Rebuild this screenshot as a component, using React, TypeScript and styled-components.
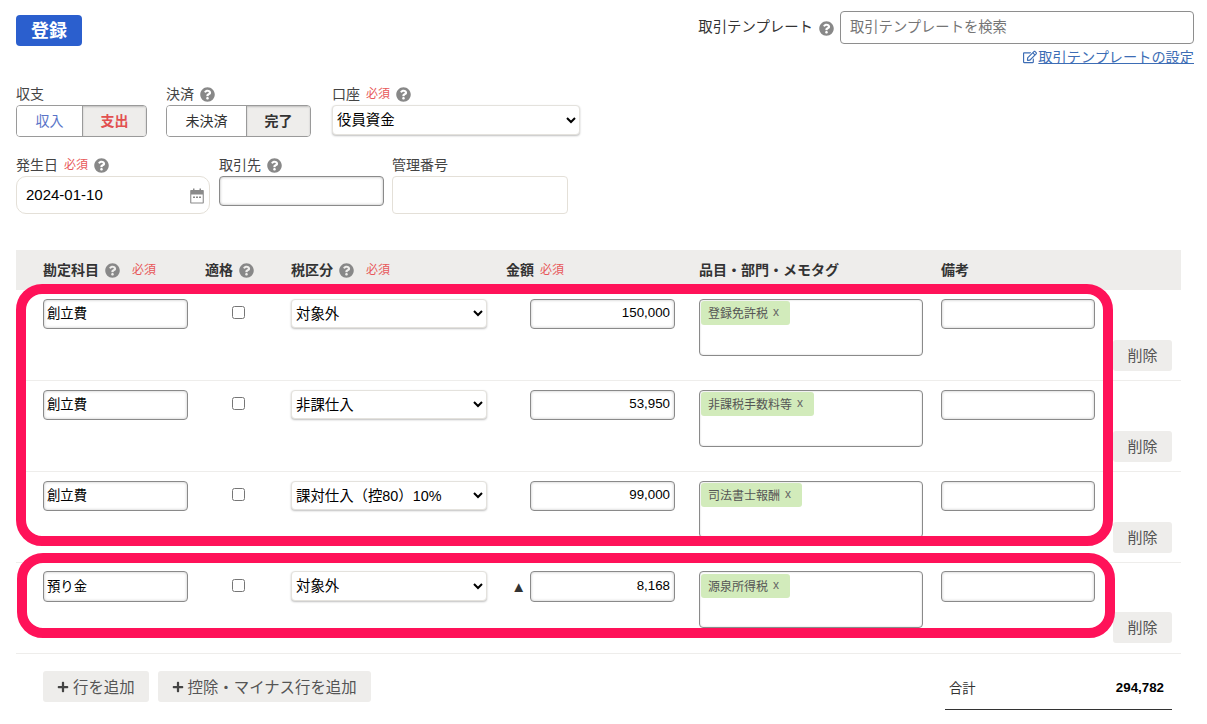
import React from "react";
import styled, { createGlobalStyle } from "styled-components";
import { FaQuestionCircle, FaPlus, FaRegEdit } from "react-icons/fa";

const FONT = `"Liberation Sans", "Noto Sans CJK JP", sans-serif`;

const GlobalStyle = createGlobalStyle`
  html, body {
    margin: 0;
    padding: 0;
    background: #fff;
    color: #333;
    font-family: ${FONT};
    font-size: 14px;
  }
  * { box-sizing: border-box; }
  input, select, button { font-family: ${FONT}; }
`;

const COLUMNS = "145px 103px 196px 188px 248px 172px 77px";

interface LineData {
  account: string;
  tax: string;
  amount: string;
  tag: string;
  minus?: boolean;
}

const LINES: LineData[] = [
  { account: "創立費", tax: "対象外", amount: "150,000", tag: "登録免許税" },
  { account: "創立費", tax: "非課仕入", amount: "53,950", tag: "非課税手数料等" },
  { account: "創立費", tax: "課対仕入（控80）10%", amount: "99,000", tag: "司法書士報酬" },
  { account: "預り金", tax: "対象外", amount: "8,168", tag: "源泉所得税", minus: true },
];

const HelpMark = styled.span`
  display: inline-flex;
  margin: 3px 0 0 6px;
  color: #888;
`;

const Help = () => (
  <HelpMark>
    <FaQuestionCircle size={15} />
  </HelpMark>
);

const Calendar = () => (
  <svg width="14" height="16" viewBox="0 0 14 16">
    <path d="M3 0.5h1.5v2H3zM9.5 0.5H11v2H9.5z" fill="#8a8a8a" />
    <path d="M1 2h12a.8.8 0 0 1 .8.8v12a.8.8 0 0 1-.8.8H1a.8.8 0 0 1-.8-.8v-12A.8.8 0 0 1 1 2zm.3 4.5V14.5h11.4V6.500z" fill="#8a8a8a" fillRule="evenodd" />
    <path d="M3 8.500h2v1.500H3zM6 8.500h2v1.500H6zM9 8.500h2v1.500H9z" fill="#8a8a8a" />
  </svg>
);

const Line = ({ line }: { line: LineData }) => (
  <Row $minus={line.minus}>
    <div>
      <AccountInput defaultValue={line.account} />
    </div>
    <CheckCell $minus={line.minus}>
      <input type="checkbox" />
    </CheckCell>
    <div>
      <TaxSelect defaultValue={line.tax}>
        <option>{line.tax}</option>
      </TaxSelect>
    </div>
    <AmountCell>
      {line.minus && <Triangle>▲</Triangle>}
      <AmountInput defaultValue={line.amount} />
    </AmountCell>
    <TagCell>
      <TagBox $minus={line.minus}>
        <Tag>
          {line.tag}
          <TagClose>x</TagClose>
        </Tag>
      </TagBox>
    </TagCell>
    <MemoCell>
      <MemoInput />
    </MemoCell>
    <DeleteCell>
      <GrayButton>削除</GrayButton>
    </DeleteCell>
  </Row>
);

export default function App() {
  return (
    <Page>
      <GlobalStyle />
      <TopBar>
        <SubmitButton>登録</SubmitButton>
        <TemplateArea>
          <TemplateRow>
            <TemplateLabel>取引テンプレート</TemplateLabel>
            <Help />
            <TemplateSearch placeholder="取引テンプレートを検索" />
          </TemplateRow>
          <SettingLink href="#">
            <FaRegEdit size={14} />
            取引テンプレートの設定
          </SettingLink>
        </TemplateArea>
      </TopBar>

      <FormRow $height={71}>
        <Field $width={150}>
          <FieldLabel>収支</FieldLabel>
          <Toggle $width={131}>
            <ToggleItem $width={65} $color="#5a74c8">収入</ToggleItem>
            <ToggleItem $active $color="#e25050">支出</ToggleItem>
          </Toggle>
        </Field>
        <Field $width={166}>
          <FieldLabel>決済<Help /></FieldLabel>
          <Toggle $width={145}>
            <ToggleItem $width={79}>未決済</ToggleItem>
            <ToggleItem $active>完了</ToggleItem>
          </Toggle>
        </Field>
        <Field $width={248}>
          <FieldLabel>口座<Required>必須</Required><Help /></FieldLabel>
          <AccountSelect defaultValue="役員資金">
            <option>役員資金</option>
          </AccountSelect>
        </Field>
      </FormRow>

      <FormRow $height={95}>
        <Field $width={203}>
          <FieldLabel>発生日<Required>必須</Required><Help /></FieldLabel>
          <DateWrap>
            <DateInput defaultValue="2024-01-10" />
            <CalendarIcon><Calendar /></CalendarIcon>
          </DateWrap>
        </Field>
        <Field $width={173}>
          <FieldLabel>取引先<Help /></FieldLabel>
          <PartnerInput />
        </Field>
        <Field $width={176}>
          <FieldLabel>管理番号</FieldLabel>
          <NumberInput />
        </Field>
      </FormRow>

      <Table>
        <HeaderRow>
          <HeadCell>勘定科目<Help /><Required $wide>必須</Required></HeadCell>
          <HeadCell $pad={17}>適格<Help /></HeadCell>
          <HeadCell>税区分<Help /><Required $wide>必須</Required></HeadCell>
          <HeadCell $pad={19}>金額<Required>必須</Required></HeadCell>
          <HeadCell $pad={24}>品目・部門・メモタグ</HeadCell>
          <HeadCell $pad={18}>備考</HeadCell>
          <div />
        </HeaderRow>
        {LINES.map((line, i) => (
          <Line key={i} line={line} />
        ))}
        <HighlightTop />
        <HighlightBottom />
      </Table>

      <Footer>
        <AddButtons>
          <GrayButton $add><FaPlus size={12} />行を追加</GrayButton>
          <GrayButton $add><FaPlus size={12} />控除・マイナス行を追加</GrayButton>
        </AddButtons>
        <Summary>
          <span>合計</span>
          <SummaryValue>294,782</SummaryValue>
        </Summary>
      </Footer>
    </Page>
  );
}

const Page = styled.div`
  width: 1207px;
  padding: 0 13px 0 16px;
`;

const TopBar = styled.div`
  display: flex;
  justify-content: space-between;
  align-items: flex-start;
  height: 84px;
  padding-top: 11px;
`;

const SubmitButton = styled.button`
  width: 66px;
  height: 31px;
  margin-top: 4px;
  padding: 0 0 3px;
  border: none;
  border-radius: 4px;
  background: #2b5fce;
  color: #fff;
  font-size: 18px;
  font-weight: 700;
`;

const TemplateArea = styled.div`
  display: flex;
  flex-direction: column;
  align-items: flex-end;
`;

const TemplateRow = styled.div`
  display: flex;
  align-items: center;
  ${HelpMark} { margin-top: 1px; }
`;

const TemplateLabel = styled.span`
  padding-bottom: 2px;
  font-size: 14.4px;
  line-height: 20px;
`;

const TemplateSearch = styled.input`
  width: 354px;
  height: 33px;
  margin-left: 6px;
  padding: 0 9px 2px;
  border: 1px solid #8e8e8e;
  border-radius: 4px;
  font-size: 14.3px;
  &::placeholder { color: #757575; }
`;

const SettingLink = styled.a`
  display: flex;
  align-items: center;
  gap: 1px;
  margin-top: 3px;
  color: #3d6db5;
  font-size: 14.2px;
  line-height: 20px;
  text-decoration: underline;
  svg { flex: none; }
`;

const FormRow = styled.div<{ $height: number }>`
  display: flex;
  height: ${(p) => p.$height}px;
`;

const Field = styled.div<{ $width: number }>`
  width: ${(p) => p.$width}px;
`;

const FieldLabel = styled.div`
  display: flex;
  align-items: center;
  height: 21px;
  padding-bottom: 4px;
  font-size: 14px;
  color: #444;
`;

const Required = styled.span<{ $wide?: boolean }>`
  margin-left: ${(p) => (p.$wide ? "12px" : "6px")};
  color: #e8585a;
  font-size: 12px;
  font-weight: 400;
`;

const Toggle = styled.div<{ $width: number }>`
  display: flex;
  width: ${(p) => p.$width}px;
  height: 32px;
  border: 1px solid #9a9a9a;
  border-radius: 4px;
  overflow: hidden;
`;

const ToggleItem = styled.div<{ $width?: number; $active?: boolean; $color?: string }>`
  display: flex;
  align-items: center;
  justify-content: center;
  padding-bottom: 2px;
  ${(p) => (p.$width ? `width: ${p.$width}px;` : "flex: 1;")}
  background: ${(p) => (p.$active ? "#eeedeb" : "#fff")};
  ${(p) => p.$active && "border-left: 1px solid #9a9a9a; box-shadow: inset 0 1px 2px rgba(0,0,0,.2); font-weight: 700;"}
  color: ${(p) => p.$color || "#333"};
  font-size: 14px;
`;

const AccountSelect = styled.select`
  width: 248px;
  height: 30px;
  padding: 0;
  border: 1px solid #e4e2dd;
  border-radius: 4px;
  box-shadow: 0 1px 2px rgba(0, 0, 0, 0.25);
  background: #fff;
  color: #000;
  font-size: 14.4px;
`;

const DateWrap = styled.div`
  position: relative;
  width: 194px;
  height: 38px;
`;

const DateInput = styled.input`
  width: 100%;
  height: 100%;
  padding: 0 9px 2px;
  border: 1px solid #e4e0d8;
  border-radius: 10px;
  color: #000;
  font-size: 15px;
`;

const CalendarIcon = styled.span`
  position: absolute;
  top: 12px;
  right: 6px;
  display: flex;
`;

const PartnerInput = styled.input`
  display: block;
  width: 165px;
  height: 30px;
  border: 1px solid #8a8a8a;
  border-radius: 4px;
  box-shadow: inset 0 0 3px rgba(0, 0, 0, 0.3);
`;

const NumberInput = styled.input`
  display: block;
  width: 176px;
  height: 38px;
  border: 1px solid #e4e0d8;
  border-radius: 4px;
`;

const Table = styled.div`
  position: relative;
  width: 1165px;
`;

const HeaderRow = styled.div`
  display: grid;
  grid-template-columns: ${COLUMNS};
  align-items: center;
  height: 40px;
  padding: 0 0 3px 27px;
  background: #eeedeb;
`;

const HeadCell = styled.div<{ $pad?: number }>`
  display: flex;
  align-items: center;
  padding-left: ${(p) => p.$pad || 0}px;
  color: #333;
  font-size: 14px;
  font-weight: 700;
`;

const Row = styled.div<{ $minus?: boolean }>`
  display: grid;
  grid-template-columns: ${COLUMNS};
  align-items: start;
  height: 91px;
  padding: ${(p) => (p.$minus ? "8px" : "9px")} 0 0 27px;
  border-bottom: 1px solid #eeedeb;
  ${(p) => p.$minus && "input:not([type=checkbox]) { height: 31px; } select { height: 30px; }"}
`;

const FieldInput = styled.input`
  display: block;
  height: 30px;
  padding: 0 3px 3px;
  border: 1px solid #8a8a8a;
  border-radius: 4px;
  box-shadow: inset 0 0 3px rgba(0, 0, 0, 0.25);
  color: #000;
  font-size: 13.33px;
`;

const AccountInput = styled(FieldInput)`
  width: 145px;
`;

const CheckCell = styled.div<{ $minus?: boolean }>`
  display: flex;
  justify-content: center;
  padding-top: ${(p) => (p.$minus ? "8px" : "7px")};
  padding-right: 2px;
  input { width: 13px; height: 13px; margin: 0; }
`;

const TaxSelect = styled.select`
  display: block;
  width: 196px;
  height: 29px;
  padding: 0;
  border: 1px solid #e4e2dd;
  border-radius: 4px;
  box-shadow: 0 1px 2px rgba(0, 0, 0, 0.25);
  background: #fff;
  color: #000;
  font-size: 14.4px;
`;

const AmountCell = styled.div`
  display: flex;
  justify-content: flex-end;
  align-items: center;
  gap: 4px;
`;

const Triangle = styled.span`
  color: #333;
  font-size: 15px;
`;

const AmountInput = styled(FieldInput)`
  width: 145px;
  padding-right: 4px;
  text-align: right;
`;

const TagCell = styled.div`
  padding-left: 24px;
`;

const TagBox = styled.div<{ $minus?: boolean }>`
  display: flex;
  align-items: flex-start;
  width: 224px;
  height: 57px;
  padding: ${(p) => (p.$minus ? "2px" : "1px")} 0 0 1px;
  border: 1px solid #8a8a8a;
  border-radius: 4px;
  box-shadow: inset 0 0 2px rgba(0, 0, 0, 0.2);
`;

const Tag = styled.span`
  display: inline-flex;
  align-items: center;
  height: 24px;
  padding: 0 11px 2px 7px;
  border-radius: 3px;
  background: #d2ebbb;
  color: #555;
  font-size: 12px;
`;

const TagClose = styled.span`
  margin-left: 5px;
  color: #666;
`;

const MemoCell = styled.div`
  padding-left: 18px;
`;

const MemoInput = styled(FieldInput)`
  width: 154px;
`;

const DeleteCell = styled.div`
  padding: 41px 0 0 18px;
`;

const GrayButton = styled.button<{ $add?: boolean }>`
  display: inline-flex;
  align-items: center;
  justify-content: center;
  gap: 4px;
  ${(p) => !p.$add && "width: 59px;"}
  height: 31px;
  padding: 0 14px 2px;
  border: none;
  border-radius: 3px;
  background: #eeedeb;
  color: #555;
  font-size: ${(p) => (p.$add ? "15.4px" : "15px")};
  white-space: nowrap;
  svg { color: #444; margin-top: 2px; }
`;

const Highlight = styled.div`
  position: absolute;
  border: 10px solid #ff1259;
  border-radius: 26px;
  pointer-events: none;
`;

const HighlightTop = styled(Highlight)`
  left: 0;
  top: 34px;
  width: 1097px;
  height: 262px;
`;

const HighlightBottom = styled(Highlight)`
  left: 1px;
  top: 303px;
  width: 1098px;
  height: 85px;
`;

const Footer = styled.div`
  display: flex;
  justify-content: space-between;
  width: 1165px;
  padding-left: 27px;
`;

const AddButtons = styled.div`
  display: flex;
  gap: 9px;
  margin-top: 17px;
`;

const Summary = styled.div`
  display: flex;
  justify-content: space-between;
  align-items: center;
  width: 227px;
  height: 56px;
  margin-right: 9px;
  padding: 12px 8px 0 4px;
  border-bottom: 1px solid #333;
  font-size: 13.33px;
`;

const SummaryValue = styled.span`
  color: #000;
  font-size: 13.33px;
  font-weight: 700;
`;
